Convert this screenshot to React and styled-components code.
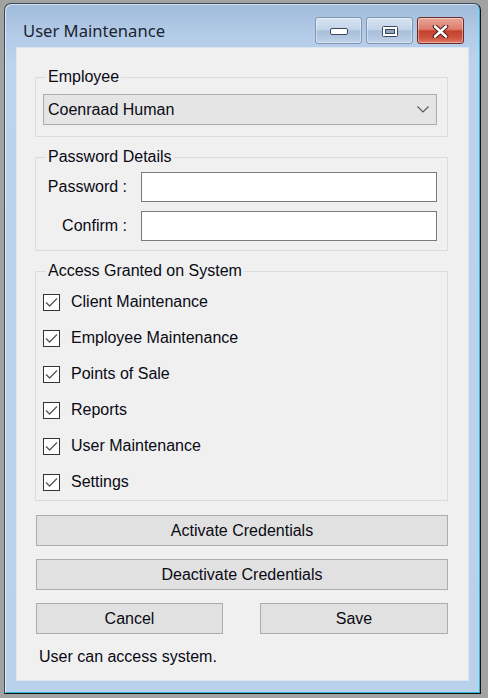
import React from 'react';
import styled, { createGlobalStyle } from 'styled-components';

const GlobalStyle = createGlobalStyle`
    html, body {
        margin: 0;
        padding: 0;
        background: #a2a2a2;
    }
    body {
        font-family: "Liberation Sans", Arial, sans-serif;
    }
`;

const Page = styled.div`
    width: 488px;
    height: 698px;
    padding: 3px 0 0 4px;
    box-sizing: border-box;
`;

const Window = styled.div`
    width: 477px;
    height: 691px;
    box-sizing: border-box;
    display: flex;
    flex-direction: column;
    border: 1px solid #3d4a58;
    border-right-color: #121212;
    border-bottom-color: #121212;
    border-radius: 7px 7px 0 0;
    background: linear-gradient(180deg, #a0bbdb 0px, #b3cbe7 30px, #bcd3ed 60px, #b9d1ea 100%);
    box-shadow: inset 1px 1px 0 rgba(255, 255, 255, 0.55), inset -1px -1px 0 #2fb6d2;
`;

const TitleBar = styled.div`
    height: 44px;
    display: flex;
    align-items: flex-start;
    padding: 0 16px 0 18px;
    flex-shrink: 0;
`;

const Title = styled.div`
    font-family: "Segoe UI", "Noto Sans", sans-serif;
    font-size: 16.6px;
    line-height: 20px;
    color: #1b2430;
    margin-top: 17px;
    flex: 1;
`;

const CaptionGroup = styled.div`
    display: flex;
    gap: 4px;
    margin-top: 13px;
`;

const CaptionButton = styled.div`
    width: 47px;
    height: 27px;
    box-sizing: border-box;
    border: 1px solid ${(p) => (p.close ? '#6b2c28' : '#8196b0')};
    border-radius: 3px;
    display: flex;
    align-items: center;
    justify-content: center;
    padding-top: 2px;
    background: ${(p) =>
        p.close
            ? 'linear-gradient(180deg, #e9a597 0%, #dc7d6c 45%, #c6402c 52%, #cf5440 80%, #dc7a66 100%)'
            : 'linear-gradient(180deg, #d6e3f1 0%, #c4d5e9 45%, #a9c0db 52%, #b3c8e1 80%, #c3d5ea 100%)'};
    box-shadow: inset 0 0 0 1px rgba(255, 255, 255, 0.4);
`;

const Client = styled.div`
    margin: 0 12px 0 12px;
    height: 632px;
    background: #f0f0f0;
    box-shadow: 0 0 0 1px #d9e5f2;
    padding: 20px 20px 0 18px;
    box-sizing: border-box;
    display: flex;
    flex-direction: column;
    color: #0a0a14;
    font-size: 16px;
`;

const Groups = styled.div`
    display: flex;
    flex-direction: column;
    gap: 11px;
`;

const GroupBox = styled.fieldset`
    margin: 0;
    padding: 0;
    border: 1px solid #dcdcdc;
    min-width: 0;
`;

const Legend = styled.legend`
    margin-left: 10px;
    padding: 0 2px;
    font-size: 16px;
    line-height: 18px;
`;

const GroupBody = styled.div`
    padding: ${(p) => p.pad};
`;

const Combo = styled.div`
    height: 31px;
    box-sizing: border-box;
    border: 1px solid #adadad;
    background: #e5e5e5;
    display: flex;
    align-items: center;
    justify-content: space-between;
    padding: 0 7px 0 4px;
    line-height: 18px;
`;

const FieldGrid = styled.div`
    display: grid;
    grid-template-columns: 91px 1fr;
    column-gap: 14px;
    row-gap: 9px;
    align-items: center;
`;

const FieldLabel = styled.label`
    text-align: right;
    white-space: nowrap;
`;

const TextBox = styled.div`
    height: 30px;
    box-sizing: border-box;
    border: 1px solid #7a7a7a;
    background: #fff;
`;

const CheckRow = styled.div`
    height: 36px;
    display: flex;
    align-items: center;
    gap: 11px;
`;

const CheckBox = styled.div`
    width: 17px;
    height: 17px;
    box-sizing: border-box;
    border: 1px solid #333;
    background: #fff;
    display: flex;
    align-items: center;
    justify-content: center;
`;

const Actions = styled.div`
    margin: 14px 0 0 1px;
    display: flex;
    flex-direction: column;
    gap: 13px;
`;

const ButtonRow = styled.div`
    display: flex;
    justify-content: space-between;
`;

const Button = styled.div`
    width: ${(p) => p.width || 'auto'};
    height: 31px;
    box-sizing: border-box;
    border: 1px solid #adadad;
    background: #e1e1e1;
    display: flex;
    align-items: center;
    justify-content: center;
    line-height: 18px;
`;

const Status = styled.div`
    margin: 14px 0 0 4px;
    line-height: 18px;
`;

const accessItems = [
    'Client Maintenance',
    'Employee Maintenance',
    'Points of Sale',
    'Reports',
    'User Maintenance',
    'Settings',
];

const MinGlyph = () => (
    <svg width="18" height="8" viewBox="0 0 18 8">
        <rect x="0.5" y="0.5" width="17" height="6" rx="1.5" fill="#fff" stroke="#3b4858" />
    </svg>
);

const MaxGlyph = () => (
    <svg width="16" height="11" viewBox="0 0 16 11">
        <rect x="0.5" y="0.5" width="15" height="10" rx="1" fill="#fff" stroke="#3b4858" />
        <rect x="3.5" y="3.5" width="9" height="4" fill="#8fa6c2" stroke="#3b4858" />
    </svg>
);

const CloseGlyph = () => (
    <svg width="17" height="13" viewBox="0 0 17 13">
        <path d="M3 1.5 L14 11.5 M14 1.5 L3 11.5" stroke="#4a1c18" strokeWidth="4.6" strokeLinecap="round" />
        <path d="M3 1.5 L14 11.5 M14 1.5 L3 11.5" stroke="#fff" strokeWidth="2.6" strokeLinecap="round" />
    </svg>
);

const Chevron = () => (
    <svg width="12" height="7" viewBox="0 0 12 7">
        <polyline points="0.5,0.5 6,6 11.5,0.5" fill="none" stroke="#555" strokeWidth="1.1" />
    </svg>
);

const Tick = () => (
    <svg width="13" height="11" viewBox="0 0 13 11">
        <polyline points="1,5.5 4.6,9 12,1.5" fill="none" stroke="#555" strokeWidth="1.3" />
    </svg>
);

const App = () => {
    return (
        <>
            <GlobalStyle />
            <Page>
                <Window>
                    <TitleBar>
                        <Title>User Maintenance</Title>
                        <CaptionGroup>
                            <CaptionButton>
                                <MinGlyph />
                            </CaptionButton>
                            <CaptionButton>
                                <MaxGlyph />
                            </CaptionButton>
                            <CaptionButton close>
                                <CloseGlyph />
                            </CaptionButton>
                        </CaptionGroup>
                    </TitleBar>
                    <Client>
                        <Groups>
                            <GroupBox>
                                <Legend>Employee</Legend>
                                <GroupBody pad="8px 10px 11px 7px">
                                    <Combo>
                                        <span>Coenraad Human</span>
                                        <Chevron />
                                    </Combo>
                                </GroupBody>
                            </GroupBox>
                            <GroupBox>
                                <Legend>Password Details</Legend>
                                <GroupBody pad="6px 10px 9px 0">
                                    <FieldGrid>
                                        <FieldLabel>Password :</FieldLabel>
                                        <TextBox />
                                        <FieldLabel>Confirm :</FieldLabel>
                                        <TextBox />
                                    </FieldGrid>
                                </GroupBody>
                            </GroupBox>
                            <GroupBox>
                                <Legend>Access Granted on System</Legend>
                                <GroupBody pad="4px 10px 0 7px">
                                    {accessItems.map((item) => (
                                        <CheckRow key={item}>
                                            <CheckBox>
                                                <Tick />
                                            </CheckBox>
                                            <span>{item}</span>
                                        </CheckRow>
                                    ))}
                                </GroupBody>
                            </GroupBox>
                        </Groups>
                        <Actions>
                            <Button>Activate Credentials</Button>
                            <Button>Deactivate Credentials</Button>
                            <ButtonRow>
                                <Button width="187px">Cancel</Button>
                                <Button width="188px">Save</Button>
                            </ButtonRow>
                        </Actions>
                        <Status>User can access system.</Status>
                    </Client>
                </Window>
            </Page>
        </>
    );
};

export default App;
